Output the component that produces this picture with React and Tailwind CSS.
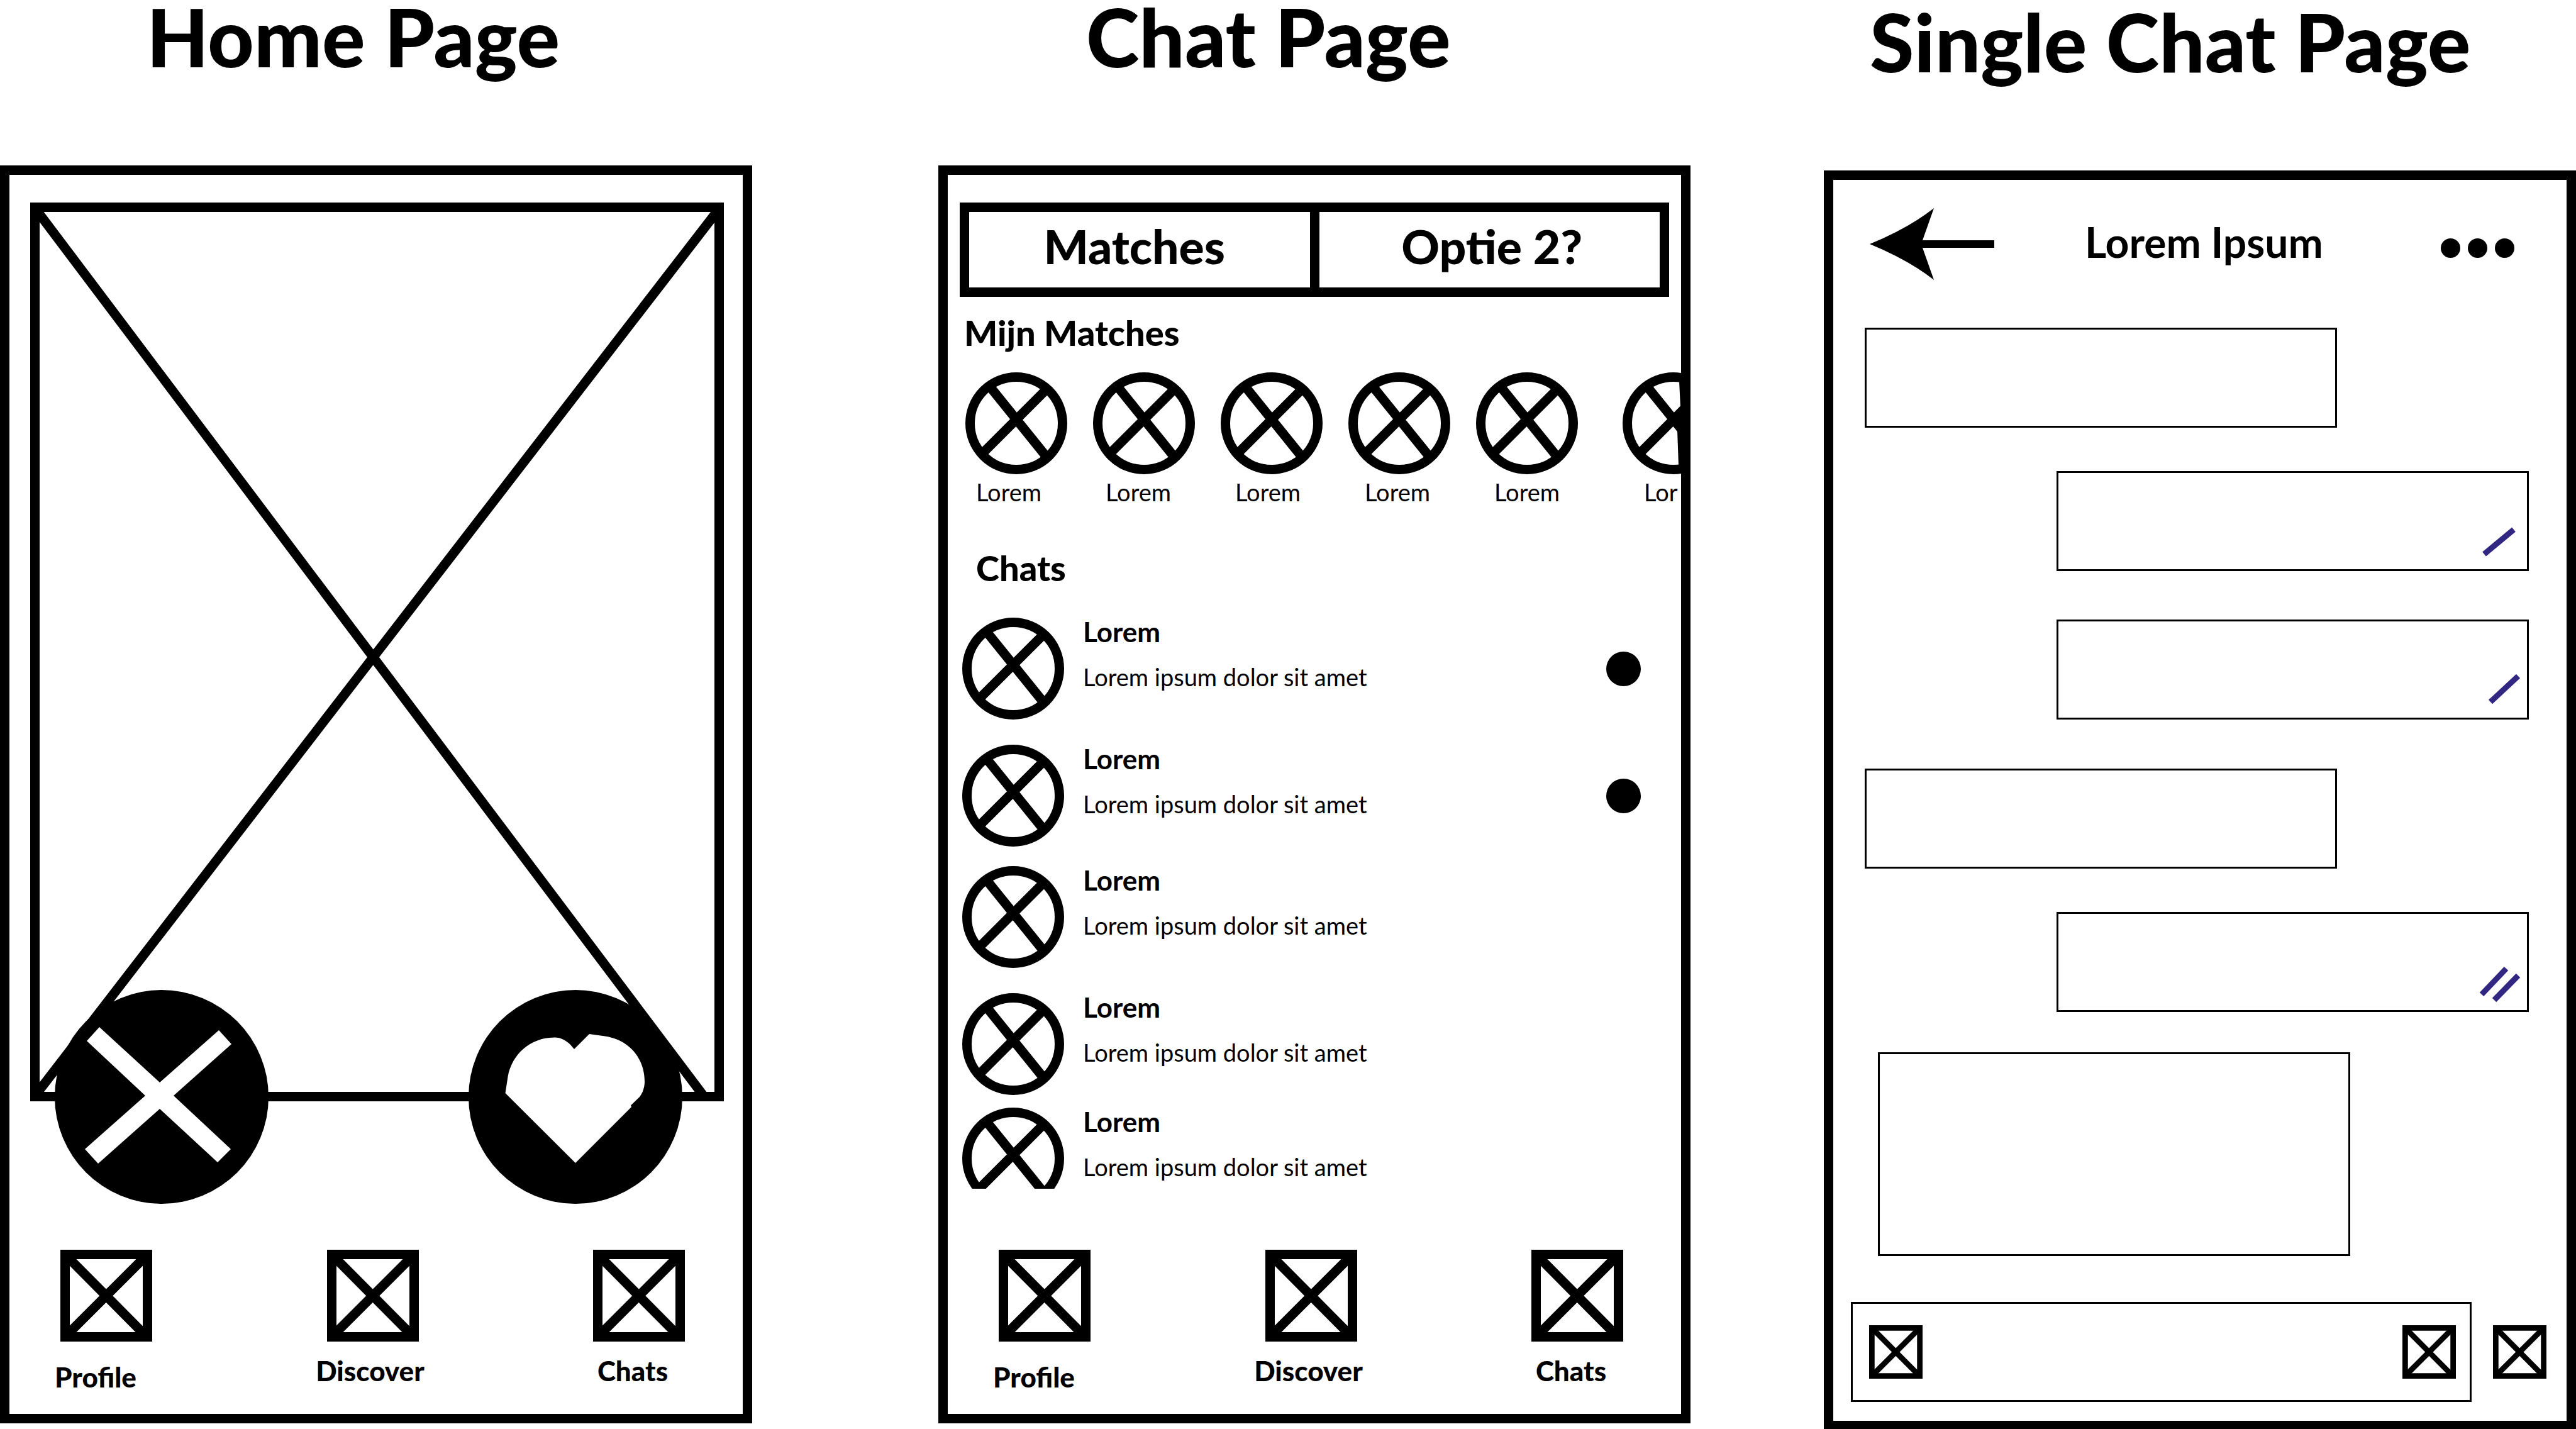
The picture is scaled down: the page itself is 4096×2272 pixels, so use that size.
const matches = ["Lorem", "Lorem", "Lorem", "Lorem", "Lorem"];

const chats = [
  { unread: true, row: "h-[162px]" },
  { unread: true, row: "mt-10 h-[162px]" },
  { unread: false, row: "mt-[31px] h-[162px]" },
  { unread: false, row: "mt-10 h-[162px]" },
  { unread: false, row: "mt-5 h-[129px]", cut: true },
];

const navItems = [
  { label: "Profile", place: "mt-[35px] pr-[34px]" },
  { label: "Discover", place: "mt-[25px] pr-2" },
  { label: "Chats", place: "mt-[25px] pr-5" },
];

const messages = [
  { mine: false, box: "ml-[50px] h-[159px]", ticks: [] },
  { mine: true, box: "mt-[69px] mr-[60px] h-[159px]", ticks: ["M22 66 69 27"] },
  { mine: true, box: "mt-[77px] mr-[60px] h-[159px]", ticks: ["M32 65 76 24"] },
  { mine: false, box: "mt-[78px] ml-[50px] h-[159px]", ticks: [] },
  { mine: true, box: "mt-[69px] mr-[60px] h-[159px]", ticks: ["M18 65 57 24", "M38 74 76 35"] },
  { mine: false, box: "mt-16 ml-[71px] h-[324px]", ticks: [] },
];

function CrossedBox({ className }) {
  return (
    <svg viewBox="0 0 146 146" className={className} fill="none" stroke="black" strokeWidth="15" aria-hidden="true">
      <rect x="7.5" y="7.5" width="131" height="131" />
      <path d="M10 10 136 137M136 10 10 136" />
    </svg>
  );
}

function CrossedCircle() {
  return (
    <svg viewBox="0 0 162 162" className="size-[162px] shrink-0" fill="none" stroke="black" strokeWidth="15" aria-hidden="true">
      <circle cx="81" cy="81" r="73.5" />
      <path d="M40 24 128 133M128 28 28 128" />
    </svg>
  );
}

// Circle that runs under the right edge of the phone.
function SideCutCircle() {
  return (
    <svg viewBox="0 0 94 162" className="ml-[30px] h-[162px] w-[94px] shrink-0" fill="none" stroke="black" strokeWidth="15" aria-hidden="true">
      <circle cx="81" cy="81" r="73.5" />
      <path d="M40 24 128 133M128 28 28 128" />
      <path d="M90 14 92 55 87 92 89 148H94V14Z" fill="black" stroke="none" />
    </svg>
  );
}

// Circle whose lower part is scrolled out of the list.
function BottomCutCircle() {
  return (
    <svg viewBox="0 0 162 129" className="h-[129px] w-[162px] shrink-0" fill="none" stroke="black" strokeWidth="15" aria-hidden="true">
      <circle cx="81" cy="81" r="73.5" />
      <path d="M40 24 128 133M128 28 28 128" />
    </svg>
  );
}

function BottomNav({ className }) {
  return (
    <nav className={`flex items-start justify-between pr-[92px] pb-[38px] pl-[81px] ${className}`}>
      {navItems.map((item) => (
        <button key={item.label} type="button" className="flex w-[146px] flex-col items-center">
          <CrossedBox className="size-[146px]" />
          <span className={`text-[44px] leading-[42px] font-black whitespace-nowrap ${item.place}`}>{item.label}</span>
        </button>
      ))}
    </nav>
  );
}

function Title({ className, children }) {
  return <h1 className={`mb-[147px] text-[128px] leading-[116px] font-black whitespace-nowrap ${className}`}>{children}</h1>;
}

function HomePage() {
  return (
    <section className="min-w-0 flex-1">
      <Title className="pl-[233px]">Home Page</Title>
      <div className="border-[15px] border-black">
        <div className="pt-11 pr-[30px] pl-[33px]">
          <svg viewBox="0 0 1103 1429" className="block w-full" fill="none" stroke="black" strokeWidth="15" aria-hidden="true">
            <rect x="7.5" y="7.5" width="1088" height="1414" />
            <path d="M4 4 1072 1422M1100 4 4 1425" />
          </svg>
        </div>
        <div className="relative -mt-[177px] flex justify-between pr-24 pl-[72px]">
          <button type="button" aria-label="Dislike" className="size-[340px] rounded-full bg-black">
            <svg viewBox="0 0 340 340" className="size-full" fill="white" aria-hidden="true">
              <path d="M71 59 51 81 144 168 48 253 69 276 167 189 259 274 280 253 189 168 281 86 261 64 167 147Z" />
            </svg>
          </button>
          <button type="button" aria-label="Like" className="size-[340px] rounded-full bg-black">
            <svg viewBox="0 0 340 340" className="size-full" fill="white" aria-hidden="true">
              <path d="M168 94 192 70 217 73.5C254 79 280 107 280 146C280 154 277 164 272 170L258 183.5 259 186 170 275 58.5 164 62.5 138C69 102 98 76 136 75.5C146 75 155 80 162 87Z" />
            </svg>
          </button>
        </div>
        <BottomNav className="mt-[73px]" />
      </div>
    </section>
  );
}

function ChatPage() {
  return (
    <section className="ml-[296px] min-w-0 flex-1">
      <Title className="pl-[235px]">Chat Page</Title>
      <div className="border-[15px] border-black">
        <div className="mx-[19px] mt-11 flex h-[150px] text-[75px] leading-[80px] font-black">
          <button type="button" className="flex flex-1 items-center justify-center border-[15px] border-black">
            <span className="pr-4 pb-3">Matches</span>
          </button>
          <button type="button" className="-ml-[15px] flex flex-1 items-center justify-center border-[15px] border-black">
            <span className="pb-3 pl-2">Optie 2?</span>
          </button>
        </div>
        <h2 className="mt-[26px] pl-[26px] text-[56px] leading-[62px] font-black">Mijn Matches</h2>
        <div className="mt-8 flex gap-[41px] overflow-hidden pl-7">
          {matches.map((name, i) => (
            <CrossedCircle key={i} />
          ))}
          <SideCutCircle />
        </div>
        <div className="mt-2 flex gap-11 pl-4 text-[38px] leading-10">
          {matches.map((name, i) => (
            <span key={i} className="w-[162px] shrink-0 text-center">{name}</span>
          ))}
          <span className="shrink-0 pl-[61px]">Lor</span>
        </div>
        <h2 className="mt-[70px] pl-[45px] text-[56px] leading-[62px] font-black">Chats</h2>
        <ul className="mt-12 pr-16 pl-[23px]">
          {chats.map((chat, i) => (
            <li key={i} className={`flex items-start gap-[30px] ${chat.row}`}>
              {chat.cut ? <BottomCutCircle /> : <CrossedCircle />}
              <div>
                <p className="text-[44px] leading-11 font-bold">Lorem</p>
                <p className="mt-[29px] text-[38px] leading-[42px]">Lorem ipsum dolor sit amet</p>
              </div>
              {chat.unread && <span className="ml-auto size-[55px] self-center rounded-full bg-black" />}
            </li>
          ))}
        </ul>
        <BottomNav className="mt-[97px]" />
      </div>
    </section>
  );
}

function SingleChatPage() {
  return (
    <section className="ml-[212px] min-w-0 flex-1 pt-2">
      <Title className="pl-[73px]">Single Chat Page</Title>
      <div className="border-[15px] border-black">
        <header className="mt-[45px] flex h-[114px] items-center pr-[83px] pl-[58px]">
          <button type="button" aria-label="Back">
            <svg viewBox="0 0 198 114" className="h-[114px] w-[198px]" aria-hidden="true">
              <path d="M0 57Q61 32 102 0L84 51H198V63H84L102 114Q61 82 0 57Z" />
            </svg>
          </button>
          <h2 className="ml-36 pb-1.5 text-[66px] leading-[70px] font-bold">Lorem Ipsum</h2>
          <button type="button" aria-label="More options" className="ml-auto flex gap-3 pt-3">
            <span className="size-[31px] rounded-full bg-black" />
            <span className="size-[31px] rounded-full bg-black" />
            <span className="size-[31px] rounded-full bg-black" />
          </button>
        </header>
        <div className="mt-[76px] flex flex-col">
          {messages.map((message, i) => (
            <div
              key={i}
              className={`flex w-[64.4%] items-end justify-end border-[3px] border-black ${message.mine ? "self-end" : "self-start"} ${message.box}`}
            >
              {message.ticks.length > 0 && (
                <svg viewBox="0 0 90 90" className="size-[90px]" fill="none" stroke="#312783" strokeWidth="9" aria-hidden="true">
                  {message.ticks.map((d) => (
                    <path key={d} d={d} />
                  ))}
                </svg>
              )}
            </div>
          ))}
        </div>
        <form className="mt-[73px] flex items-center pr-8 pb-[30px] pl-7">
          <div className="flex h-[159px] min-w-0 flex-1 items-center border-[3px] border-black pr-[22px] pl-[26px]">
            <button type="button" aria-label="Emoji">
              <CrossedBox className="size-[85px]" />
            </button>
            <input type="text" aria-label="Message" className="h-full min-w-0 flex-1 px-6 text-[38px] outline-none" />
            <button type="button" aria-label="Attach">
              <CrossedBox className="size-[85px]" />
            </button>
          </div>
          <button type="button" aria-label="Send" className="ml-[34px]">
            <CrossedBox className="size-[85px]" />
          </button>
        </form>
      </div>
    </section>
  );
}

export default function App() {
  return (
    <main className="flex items-start bg-white font-['Lato',sans-serif] text-black">
      <HomePage />
      <ChatPage />
      <SingleChatPage />
    </main>
  );
}
